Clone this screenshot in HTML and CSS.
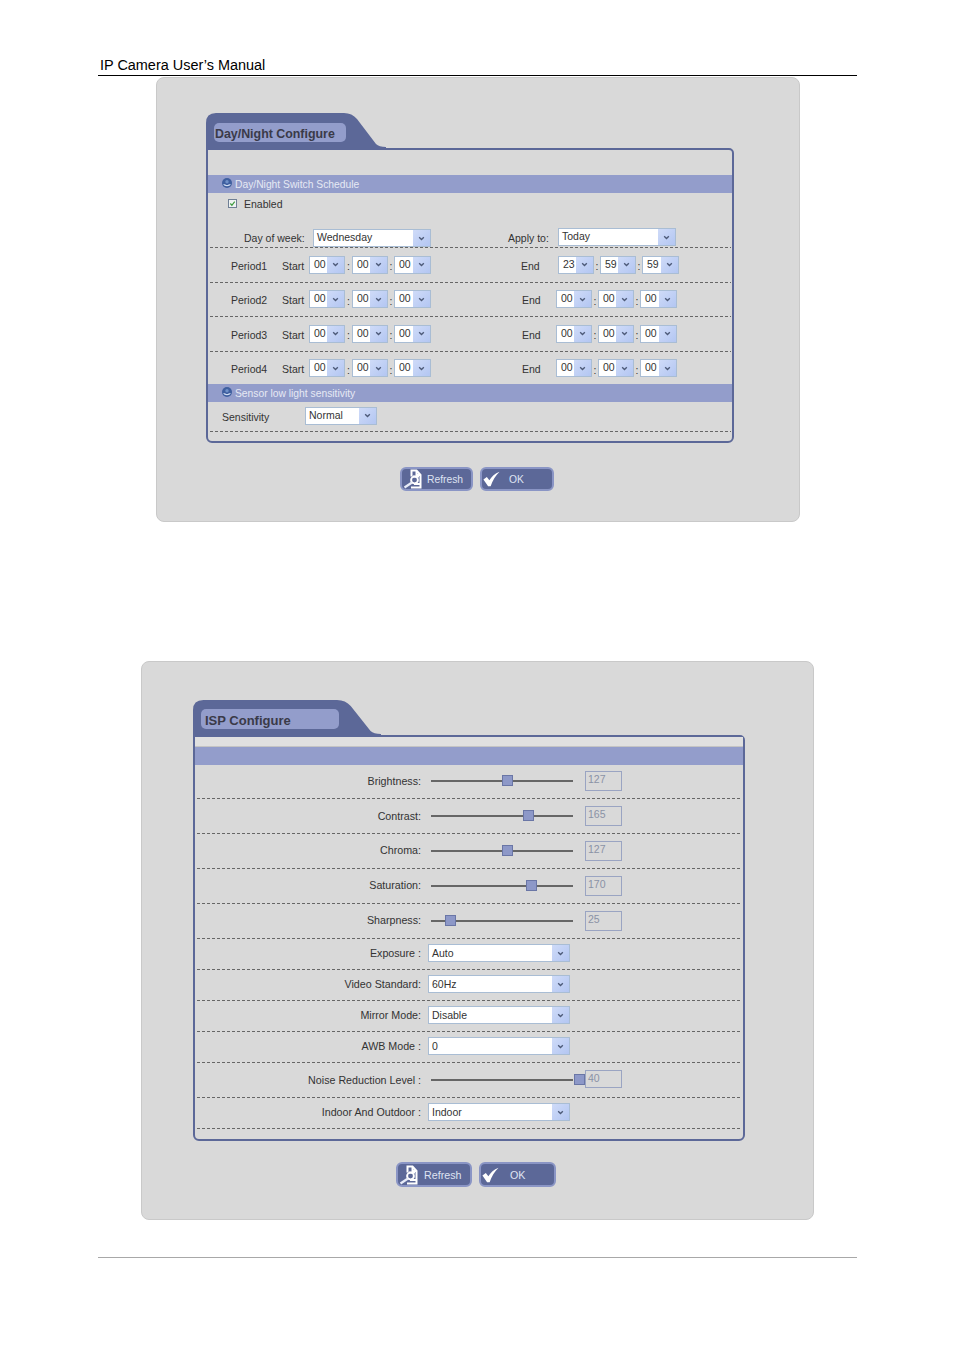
FILE: index.html
```html
<!DOCTYPE html>
<html lang="en">
<head>
<meta charset="utf-8">
<title>IP Camera User's Manual</title>
<link rel="stylesheet" href="styles.css">
</head>
<body>
<svg class="defs" width="0" height="0" aria-hidden="true">
  <symbol id="chev" viewBox="0 0 8 6"><path d="M1.2 1.4 4 4.2 6.8 1.4" fill="none" stroke="#4d5a78" stroke-width="1.6"/></symbol>
  <symbol id="ball" viewBox="0 0 10 10"><circle cx="5" cy="5" r="5" fill="#3f5f9f"/><path d="M1 6.2h2.2a2 1.6 0 0 0 3.6 0H9A4.4 3.6 0 0 1 1 6.2Z" fill="#cfdcf2"/><circle cx="5" cy="3.8" r="1.700" fill="#6f90c8"/></symbol>
  <symbol id="doc" viewBox="0 0 20 20"><path d="M7.500 1.500h6l4 4.500v12.500H8M8.500 2v5.500M13.500 1.500v4.500h4" fill="none" stroke="#fff" stroke-width="2"/><path d="M10 7.500h6M11 15h6" stroke="#fff" stroke-width="1.800"/><circle cx="11.500" cy="11" r="3.400" fill="none" stroke="#fff" stroke-width="1.900"/><path d="M9 13.500 1.500 18.500" stroke="#e8ecf8" stroke-width="2.200"/></symbol>
  <symbol id="tick" viewBox="0 0 20 18"><path d="M0.500 9.500 4.500 6.500 7.500 10.500C10 6.500 14 2.500 19.500 0.500 15 5 11 11 9 17.500H6Z" fill="#fff"/></symbol>
</svg>

<header class="page-head">IP Camera User’s Manual</header>

<section class="panel panel-day">
  <div class="tab tab-day">
    <svg class="tab-shape" viewBox="0 0 180 35" preserveAspectRatio="none"><path d="M0 35V10Q0 0 10 0H138Q146 0 151 6L170 31Q173 34 180 34V35Z"/></svg>
    <h2 class="tab-label">Day/Night Configure</h2>
  </div>
  <div class="frame frame-day">
    <div class="gap-25"></div>
    <div class="bar"><svg class="ball"><use href="#ball"/></svg>Day/Night Switch Schedule</div>
    <div class="enabled-row"><span class="check"><svg viewBox="0 0 8 8"><path d="M1.500 4 3.300 6 6.500 1.800" fill="none" stroke="#3c9a3c" stroke-width="1.300"/></svg></span>Enabled</div>
    <div class="row row-week">
      <span class="lbl w-week">Day of week:</span>
      <div class="combo c-118"><span>Wednesday</span><i><svg><use href="#chev"/></svg></i></div>
      <span class="lbl w-apply">Apply to:</span>
      <div class="combo c-118 up-1"><span>Today</span><i><svg><use href="#chev"/></svg></i></div>
    </div>

    <div class="row row-35 period">
      <span class="lbl w-period">Period1</span><span class="lbl w-start">Start</span>
      <div class="combo c-36"><span>00</span><i><svg><use href="#chev"/></svg></i></div><b>:</b>
      <div class="combo c-36"><span>00</span><i><svg><use href="#chev"/></svg></i></div><b class="b-6">:</b>
      <div class="combo c-37"><span>00</span><i><svg><use href="#chev"/></svg></i></div>
      <span class="lbl w-end-a">End</span>
      <div class="combo c-36"><span>23</span><i><svg><use href="#chev"/></svg></i></div><b class="b-6">:</b>
      <div class="combo c-36"><span>59</span><i><svg><use href="#chev"/></svg></i></div><b class="b-6">:</b>
      <div class="combo c-37"><span>59</span><i><svg><use href="#chev"/></svg></i></div>
    </div>
    <div class="row row-34 period">
      <span class="lbl w-period">Period2</span><span class="lbl w-start">Start</span>
      <div class="combo c-36"><span>00</span><i><svg><use href="#chev"/></svg></i></div><b>:</b>
      <div class="combo c-36"><span>00</span><i><svg><use href="#chev"/></svg></i></div><b class="b-6">:</b>
      <div class="combo c-37"><span>00</span><i><svg><use href="#chev"/></svg></i></div>
      <span class="lbl w-end-b">End</span>
      <div class="combo c-36"><span>00</span><i><svg><use href="#chev"/></svg></i></div><b class="b-6">:</b>
      <div class="combo c-36"><span>00</span><i><svg><use href="#chev"/></svg></i></div><b class="b-6">:</b>
      <div class="combo c-37"><span>00</span><i><svg><use href="#chev"/></svg></i></div>
    </div>
    <div class="row row-35 period">
      <span class="lbl w-period">Period3</span><span class="lbl w-start">Start</span>
      <div class="combo c-36"><span>00</span><i><svg><use href="#chev"/></svg></i></div><b>:</b>
      <div class="combo c-36"><span>00</span><i><svg><use href="#chev"/></svg></i></div><b class="b-6">:</b>
      <div class="combo c-37"><span>00</span><i><svg><use href="#chev"/></svg></i></div>
      <span class="lbl w-end-b">End</span>
      <div class="combo c-36"><span>00</span><i><svg><use href="#chev"/></svg></i></div><b class="b-6">:</b>
      <div class="combo c-36"><span>00</span><i><svg><use href="#chev"/></svg></i></div><b class="b-6">:</b>
      <div class="combo c-37"><span>00</span><i><svg><use href="#chev"/></svg></i></div>
    </div>
    <div class="row row-32 period plain">
      <span class="lbl w-period">Period4</span><span class="lbl w-start">Start</span>
      <div class="combo c-36"><span>00</span><i><svg><use href="#chev"/></svg></i></div><b>:</b>
      <div class="combo c-36"><span>00</span><i><svg><use href="#chev"/></svg></i></div><b class="b-6">:</b>
      <div class="combo c-37"><span>00</span><i><svg><use href="#chev"/></svg></i></div>
      <span class="lbl w-end-b">End</span>
      <div class="combo c-36"><span>00</span><i><svg><use href="#chev"/></svg></i></div><b class="b-6">:</b>
      <div class="combo c-36"><span>00</span><i><svg><use href="#chev"/></svg></i></div><b class="b-6">:</b>
      <div class="combo c-37"><span>00</span><i><svg><use href="#chev"/></svg></i></div>
    </div>
    <div class="bar"><svg class="ball"><use href="#ball"/></svg>Sensor low light sensitivity</div>
    <div class="row row-sens">
      <span class="lbl w-sens">Sensitivity</span>
      <div class="combo c-72"><span>Normal</span><i><svg><use href="#chev"/></svg></i></div>
    </div>
  </div>
  <div class="actions actions-day">
    <button class="btn btn-73" type="button"><svg class="ico-doc"><use href="#doc"/></svg>Refresh</button>
    <button class="btn btn-74" type="button"><svg class="ico-tick"><use href="#tick"/></svg>OK</button>
  </div>
</section>

<section class="panel panel-isp">
  <div class="tab tab-isp">
    <svg class="tab-shape" viewBox="0 0 180 35" preserveAspectRatio="none"><path d="M0 35V10Q0 0 10 0H138Q146 0 151 6L170 31Q173 34 180 34V35Z"/></svg>
    <h2 class="tab-label">ISP Configure</h2>
  </div>
  <div class="frame frame-isp">
    <div class="gap-10"></div>
    <div class="bar"></div>
    <div class="row row-34 isp"><span class="name">Brightness:</span><div class="slider"><i style="left:76px"></i></div><span class="value">127</span></div>
    <div class="row row-35 isp"><span class="name">Contrast:</span><div class="slider"><i style="left:97px"></i></div><span class="value">165</span></div>
    <div class="row row-35 isp"><span class="name name-up">Chroma:</span><div class="slider"><i style="left:76px"></i></div><span class="value">127</span></div>
    <div class="row row-35 isp"><span class="name name-up">Saturation:</span><div class="slider"><i style="left:100px"></i></div><span class="value">170</span></div>
    <div class="row row-35 isp"><span class="name name-up">Sharpness:</span><div class="slider"><i style="left:19px"></i></div><span class="value">25</span></div>
    <div class="row row-31 isp"><span class="name">Exposure :</span><div class="combo c-142"><span>Auto</span><i><svg><use href="#chev"/></svg></i></div></div>
    <div class="row row-31 isp"><span class="name">Video Standard:</span><div class="combo c-142"><span>60Hz</span><i><svg><use href="#chev"/></svg></i></div></div>
    <div class="row row-31 isp"><span class="name">Mirror Mode:</span><div class="combo c-142"><span>Disable</span><i><svg><use href="#chev"/></svg></i></div></div>
    <div class="row row-31 isp"><span class="name">AWB Mode :</span><div class="combo c-142"><span>0</span><i><svg><use href="#chev"/></svg></i></div></div>
    <div class="row row-35 isp"><span class="name">Noise Reduction Level :</span><div class="slider"><i style="left:148px"></i></div><span class="value value-short">40</span></div>
    <div class="row row-31 isp"><span class="name">Indoor And Outdoor :</span><div class="combo c-142"><span>Indoor</span><i><svg><use href="#chev"/></svg></i></div></div>
  </div>
  <div class="actions actions-isp">
    <button class="btn btn-76" type="button"><svg class="ico-doc"><use href="#doc"/></svg>Refresh</button>
    <button class="btn btn-77" type="button"><svg class="ico-tick"><use href="#tick"/></svg>OK</button>
  </div>
</section>

<footer class="page-foot"></footer>
</body>
</html>
```
FILE: styles.css
```css
* { box-sizing: border-box; }
html, body { margin: 0; padding: 0; background: #fff; }
body {
  width: 954px;
  height: 1350px;
  overflow: hidden;
  font-family: "Liberation Sans", Arial, sans-serif;
  font-size: 10.5px;
  color: #333;
}
.defs { position: absolute; }

.page-head {
  margin: 0 97px 0 98px;
  padding: 57px 0 0 2px;
  height: 76px;
  font-size: 14.45px;
  line-height: 17px;
  color: #000;
  border-bottom: 1px solid #000;
}
.page-foot {
  margin: 37px 97px 0 98px;
  height: 1px;
  background: #a8a8a8;
}

.panel {
  background: #d9d9d9;
  border: 1px solid #c9c9c9;
  border-radius: 8px;
}
.panel-day { margin: 1px 0 0 156px; width: 644px; height: 445px; padding: 35px 0 0 49px; }
.panel-isp { margin: 139px 0 0 141px; width: 673px; height: 559px; padding: 38px 0 0 51px; }

.tab { position: relative; height: 35px; }
.tab-day { width: 180px; }
.tab-isp { width: 188px; }
.tab-shape { position: absolute; inset: 0; width: 100%; height: 100%; fill: #5c6898; }
.tab-label {
  position: relative;
  margin: 0;
  font-weight: bold;
  color: #3a3a48;
  background: #939dcb;
  border-radius: 5px;
}
.tab-day .tab-label { top: 10px; margin-left: 8px; width: 132px; height: 19px; padding-left: 1px; font-size: 12.4px; line-height: 22px; }
.tab-isp .tab-label { top: 9px; margin-left: 8px; width: 138px; height: 20px; padding-left: 4px; font-size: 13px; line-height: 23px; }

.frame {
  border: 2px solid #5c6898;
  border-radius: 0 5px 6px 6px;
  background: #d9d9d9;
}
.frame-day { width: 528px; height: 295px; }
.frame-isp { width: 552px; height: 406px; }
.gap-25 { height: 25px; }
.gap-10 { height: 10px; border-bottom: 1px solid #c4c4c4; background: #e0e0e0; }

.bar {
  display: flex;
  align-items: center;
  height: 18px;
  padding: 2px 0 0 14px;
  background: #939dcb;
  color: #e6e9f4;
  font-size: 10.3px;
  line-height: 16px;
}
.ball { width: 10px; height: 10px; margin: -4px 3px 0 0; }

.enabled-row {
  display: flex;
  align-items: center;
  height: 22px;
  padding-left: 20px;
  line-height: 24px;
}
.check {
  display: block;
  width: 9px;
  height: 9px;
  margin: -2px 7px 0 0;
  border: 1px solid #6f7f95;
  background: #eef2f2;
}
.check svg { display: block; width: 7px; height: 7px; }

.row {
  display: flex;
  align-items: center;
  margin: 0 1px 0 2px;
  background: repeating-linear-gradient(90deg, #666 0 3px, transparent 3px 5px) left bottom / 100% 1px no-repeat;
}
.row.plain { background: none; }
.row-31 { height: 31px; padding-bottom: 3px; }
.row-32 { height: 32px; }
.row-34 { height: 34px; padding-bottom: 2px; }
.row-35 { height: 35px; padding-bottom: 2px; }
.row-week { height: 33px; align-items: flex-start; padding: 14px 0 0 34px; }
.row-sens { height: 30px; padding-left: 12px; }

.lbl { display: block; padding-top: 2px; white-space: nowrap; }
.row-week .lbl { padding-top: 3px; }
.period { padding-left: 21px; }
.w-period { width: 51px; }
.w-start { width: 27px; }
.w-end-a { width: 37px; margin-left: 90px; }
.w-end-b { width: 34px; margin-left: 91px; }
.w-week { width: 69px; }
.w-apply { width: 50px; margin-left: 77px; }
.w-sens { width: 83px; padding-top: 0; }
.row-sens .combo { margin-top: -3px; }
.up-1 { margin-top: -1px; }

.period b {
  display: block;
  width: 7px;
  padding-top: 3px;
  font-weight: normal;
  text-align: center;
}
.period b.b-6 { width: 6px; }

.combo {
  display: flex;
  align-items: stretch;
  height: 18px;
  background: #fff;
  border: 1px solid #a9bdd4;
  color: #333;
  overflow: hidden;
}
.combo span { flex: 1; padding-left: 3px; line-height: 15px; white-space: nowrap; }
.combo i {
  display: flex;
  align-items: center;
  justify-content: center;
  width: 17px;
  background: linear-gradient(135deg, #cfdbf8, #b3c6f2);
}
.combo i svg { width: 7px; height: 5px; }
.c-36 { width: 36px; }
.c-37 { width: 37px; }
.c-72 { width: 72px; }
.c-118 { width: 118px; }
.c-142 { width: 142px; }
.c-142 span { line-height: 17px; }
.c-36 span, .c-37 span { padding-left: 4px; }
.c-36 i, .c-37 i { width: 17px; }

.name { display: block; width: 224px; font-size: 10.7px; text-align: right; white-space: nowrap; }
.name-up { margin-bottom: 2px; }
.isp .combo { margin-left: 7px; }
.slider {
  position: relative;
  width: 142px;
  height: 2px;
  margin-left: 10px;
  background: #666;
}
.slider i {
  position: absolute;
  top: -5px;
  width: 11px;
  height: 11px;
  margin-left: -5px;
  background: #8d98c8;
  border: 1px solid #6a76a6;
}
.value {
  display: block;
  width: 37px;
  height: 20px;
  margin-left: 12px;
  padding: 1px 0 0 2px;
  line-height: 13px;
  border: 1px solid #9aa4c2;
  color: #8a92a6;
}
.value-short { height: 18px; margin-top: -2px; }

.actions { display: flex; gap: 7px; }
.actions-day { margin: 24px 0 0 194px; }
.actions-isp { margin: 21px 0 0 203px; }
.btn {
  display: flex;
  align-items: center;
  height: 24px;
  padding: 0;
  border: 2px solid #8a95c5;
  border-radius: 6px;
  background: #5c6898;
  color: #dfe3f2;
  font: 10.3px "Liberation Sans", Arial, sans-serif;
}
.btn-73 { width: 73px; }
.btn-74 { width: 74px; }
.btn-76 { width: 76px; height: 25px; font-size: 10.7px; }
.btn-77 { width: 77px; height: 25px; font-size: 10.7px; }
.ico-doc { width: 20px; height: 20px; margin: 0 4px 0 1px; }
.btn-76 .ico-doc { margin-right: 5px; }
.ico-tick { width: 17px; height: 16px; margin: 0 9px 0 1px; }
.btn-77 .ico-tick { margin-right: 11px; }
```
